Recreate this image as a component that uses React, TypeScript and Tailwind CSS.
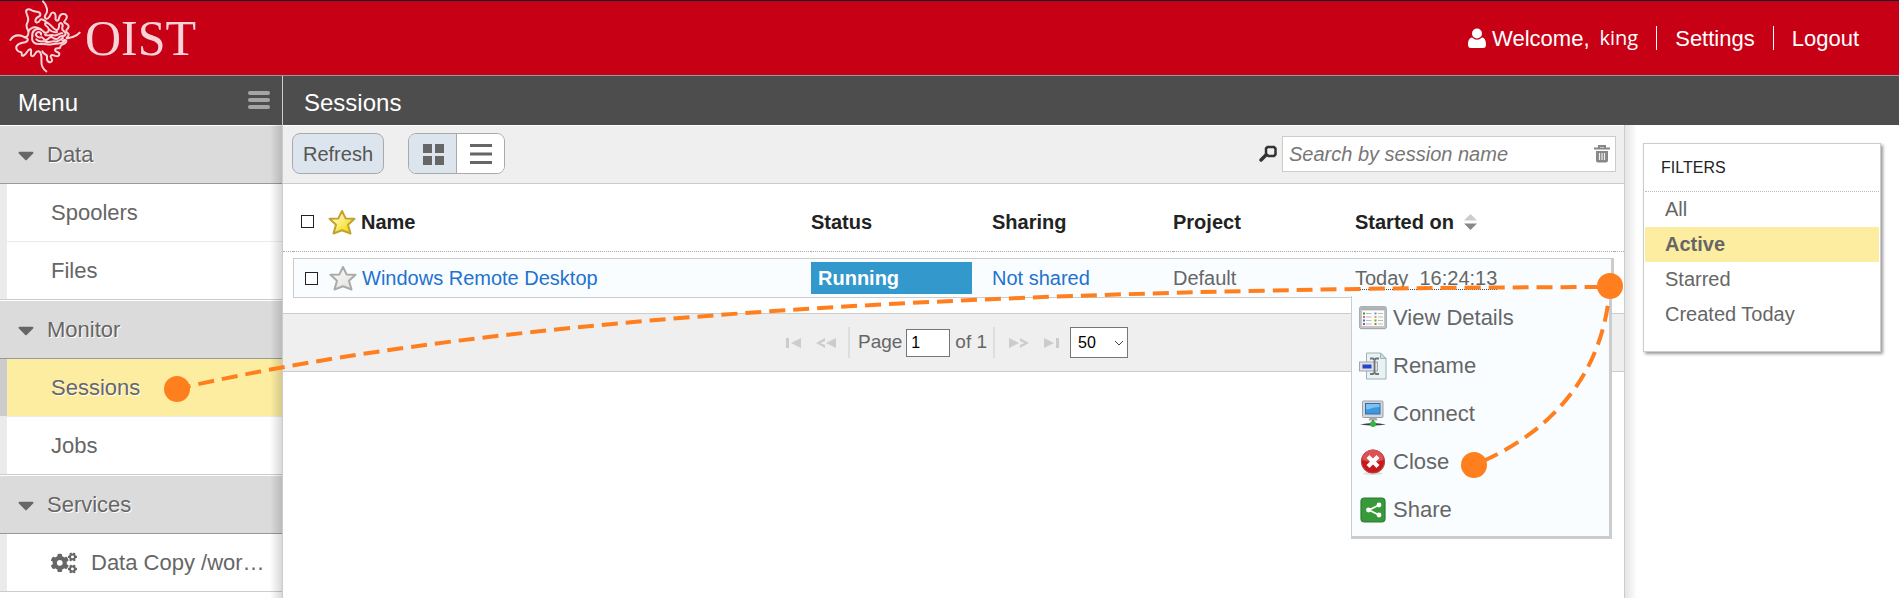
import React from 'react';
import { FaCaretDown, FaCogs } from 'react-icons/fa';

interface MenuItem {
  label: string;
  active?: boolean;
  icon?: React.ReactNode;
}

interface MenuGroup {
  title: string;
  items: MenuItem[];
}

const menuGroups: MenuGroup[] = [
  { title: 'Data', items: [{ label: 'Spoolers' }, { label: 'Files' }] },
  { title: 'Monitor', items: [{ label: 'Sessions', active: true }, { label: 'Jobs' }] },
  {
    title: 'Services',
    items: [{ label: 'Data Copy /wor…', icon: <FaCogs className="h-7 w-[26px]" /> }],
  },
];

const filters = ['All', 'Active', 'Starred', 'Created Today'];

function Emblem() {
  return (
    <svg
      viewBox="0 0 240 228"
      className="h-[76px] w-20 shrink-0"
      fill="none"
      stroke="#f8d3d8"
      strokeWidth="6"
      strokeLinecap="round"
      strokeLinejoin="round"
    >
      <path d="M114 4C126 16 130 34 122 44C116 52 122 60 130 54C140 46 134 36 146 38C158 40 146 62 156 62C166 62 158 44 172 42C188 40 188 54 180 62C172 70 186 68 190 76C194 88 182 86 184 94C188 102 196 102 188 110C180 118 188 114 200 112C212 108 216 108 224 98" />
      <path d="M16 120C28 102 42 104 56 110C68 116 72 100 70 92C64 84 62 76 68 66C74 56 66 48 64 38C60 26 72 26 82 32C94 38 104 32 106 42C108 52 96 48 92 58C88 70 100 70 104 62C108 54 116 60 122 64" />
      <path d="M70 94C82 76 98 82 108 88M58 112C78 116 66 128 52 128C36 132 30 140 36 150C42 160 52 152 50 162C50 172 60 166 66 156C74 144 80 146 78 158C76 170 84 172 90 162C96 150 106 152 108 164C112 176 106 188 112 200C116 208 120 212 124 214" />
      <path d="M112 154C116 166 128 160 126 172C124 184 134 190 140 184C146 176 132 172 138 166C144 160 156 176 162 166C168 154 150 158 150 150C152 140 166 150 166 140C166 132 176 136 182 128C188 120 180 118 172 122" />
      <path d="M82 108C80 92 94 84 106 88C118 92 114 100 124 98C134 96 134 84 124 78C116 72 122 64 130 70C140 76 142 84 150 88C158 94 164 84 162 74C166 64 176 72 172 82C168 94 182 92 182 102C180 112 168 104 162 112C158 120 148 118 142 112C134 106 132 118 124 120C114 122 116 110 108 112C98 114 90 106 94 100C100 92 110 98 108 104" />
      <path d="M82 108C78 126 90 134 106 132C122 130 132 136 146 132C160 128 170 134 178 124M94 118C104 130 114 120 124 126C134 128 142 122 150 124C162 126 166 118 174 114M120 104C128 110 138 102 148 106C156 108 164 98 172 100M132 88C140 96 148 98 156 96" />
    </svg>
  );
}

function UserIcon() {
  return (
    <svg viewBox="0 0 18 20" className="h-5 w-[18px]" fill="currentColor">
      <circle cx="9" cy="5.5" r="5" />
      <path d="M4 9.500C1 10 0 13 0 16.500Q0 20 3 20H15Q18 20 18 16.500C18 13 17 10 14 9.500Q9 14 4 9.500Z" />
    </svg>
  );
}

function Star({ gold }: { gold?: boolean }) {
  return (
    <svg viewBox="0 0 28 26" className="h-[26px] w-7">
      <defs>
        <linearGradient id={gold ? 'star-gold' : 'star-grey'} x1="0" y1="0" x2="1" y2="1">
          <stop offset="0.2" stopColor={gold ? '#fffbc8' : '#f6f6f4'} />
          <stop offset="0.8" stopColor={gold ? '#f4dc1c' : '#e6e6e4'} />
        </linearGradient>
      </defs>
      <path
        d="M14 2L17.6 9.4L26.5 9.8L20 15.8L22.5 24.5L14 21.2L5.5 24.5L8 15.8L1.5 9.8L10.4 9.4Z"
        fill={gold ? 'url(#star-gold)' : 'url(#star-grey)'}
        stroke={gold ? '#c3a12c' : '#aaaaa8'}
        strokeWidth="2"
        strokeLinejoin="round"
      />
    </svg>
  );
}

function DetailsIcon() {
  const rows = [9, 12.5, 16, 19.5];
  const left = ['#3a9d2c', '#d66', '#46e', '#a55'];
  const right = ['#59f', '#e93', '#4b3', '#d55'];
  return (
    <svg viewBox="0 0 28 28" className="size-7">
      <rect x="0.7" y="2.7" width="26.6" height="22" rx="1.5" fill="#c4c6c8" stroke="#9c9fa1" />
      <rect x="2" y="3.5" width="24" height="2.5" fill="#adb0b3" />
      <rect x="3" y="6.5" width="22" height="15.5" fill="#fbfbfa" />
      {rows.map((y, i) => (
        <g key={y}>
          <rect x="4" y={y - 0.5} width="2" height="2" fill={left[i]} />
          <path d={`M7 ${y + 0.5}h5.5M19 ${y + 0.5}h5`} stroke="#bbb" strokeWidth="1.2" />
          <rect x="15.5" y={y - 0.5} width="2" height="2" fill={right[i]} />
        </g>
      ))}
    </svg>
  );
}

function RenameIcon() {
  return (
    <svg viewBox="0 0 28 28" className="size-7">
      <path d="M7.5 1H21.5L27 6.5V27H7.5Z" fill="#e9f2f2" stroke="#9db4b2" />
      <path d="M21.5 1V6.5H27Z" fill="#cfdfdd" stroke="#9db4b2" />
      <rect x="0.5" y="10" width="18" height="9" fill="#dfe1e6" stroke="#a2a5ae" />
      <rect x="3.5" y="12.5" width="9" height="4" fill="#2444c9" />
      <path d="M11 6.5H14L15.5 8L17 6.5H20M15.5 8V20.5M11 22H14L15.5 20.5L17 22H20" fill="none" stroke="#70757a" strokeWidth="1.8" />
    </svg>
  );
}

function ConnectIcon() {
  return (
    <svg viewBox="0 0 28 28" className="size-7">
      <rect x="3.5" y="1" width="20.5" height="16.5" rx="1" fill="#d4d6d8" stroke="#9da0a3" />
      <rect x="6.5" y="3.5" width="14.5" height="10.5" fill="#3f97df" stroke="#2a6fb3" />
      <path d="M7 4H20.5V7C15 7 12 9 7 9.5Z" fill="#7fc0f2" />
      <path d="M10.5 18H17.5L18.5 20.5H9.5Z" fill="#a7aaac" />
      <path d="M1 24.5Q14 21.5 27 24.5Q14 26.5 1 24.5Z" fill="#3c3f3c" />
      <path d="M13 20h2v4h-2z" fill="#777" />
      <circle cx="14" cy="24" r="3" fill="#35b53c" />
    </svg>
  );
}

function CloseIcon() {
  return (
    <svg viewBox="0 0 28 28" className="size-7">
      <ellipse cx="14" cy="25.5" rx="10" ry="1.5" fill="#ddd" />
      <circle cx="14" cy="13.5" r="11.5" fill="#c9171c" stroke="#b5484a" strokeWidth="1.2" />
      <path d="M3.5 12A10.5 10.5 0 0 1 24.5 12Q14 16 3.5 12Z" fill="#dc5254" />
      <path d="M9 8.5L19 18.5M19 8.5L9 18.5" stroke="#fff" strokeWidth="4.2" />
    </svg>
  );
}

function ShareIcon() {
  return (
    <svg viewBox="0 0 28 28" className="size-7">
      <rect x="2" y="2" width="24" height="24" rx="3.5" fill="#37993a" stroke="#2a7c30" strokeWidth="1.2" />
      <path d="M20 9L10 14L20 19" fill="none" stroke="#fff" strokeWidth="1.8" />
      <circle cx="20" cy="9" r="2.4" fill="#fff" />
      <circle cx="9.5" cy="14" r="2.4" fill="#fff" />
      <circle cx="20" cy="19" r="2.4" fill="#fff" />
    </svg>
  );
}

const actions = [
  { label: 'View Details', icon: <DetailsIcon /> },
  { label: 'Rename', icon: <RenameIcon /> },
  { label: 'Connect', icon: <ConnectIcon /> },
  { label: 'Close', icon: <CloseIcon /> },
  { label: 'Share', icon: <ShareIcon /> },
];

function Header() {
  return (
    <header className="flex h-[76px] shrink-0 items-center justify-between border-t border-b border-t-[#14202e] border-b-[#999] bg-[#c80016] pr-10 text-[22px] text-white">
      <a href="#home" className="flex items-center pl-[5px] text-[#f8d3d8]">
        <Emblem />
        <span className="font-['Liberation_Serif',serif] text-[50px] leading-[72px]">OIST</span>
      </a>
      <nav className="flex items-center gap-[18px]">
        <div className="flex items-center gap-1.5">
          <UserIcon />
          <span>Welcome,</span>
          <span className="pl-1 font-['Open_Sans',sans-serif] text-xl leading-6">king</span>
        </div>
        <span className="h-6 w-px bg-white" />
        <a href="#settings">Settings</a>
        <span className="h-6 w-px bg-white" />
        <a href="#logout">Logout</a>
      </nav>
    </header>
  );
}

function Sidebar() {
  return (
    <aside className="relative w-[283px] shrink-0 border-r border-[#ccc] text-[22px] text-[#666]">
      {menuGroups.map((group) => (
        <section key={group.title}>
          <button className="flex h-[59px] w-full items-center border-t border-b border-t-white border-b-[#999] bg-[#dbdbdb] pl-[18px] text-left [text-shadow:1px_1px_0_#fff]">
            <FaCaretDown className="mr-[13px] h-7 w-4" />
            {group.title}
          </button>
          <ul>
            {group.items.map((item) => (
              <li key={item.label} className="border-b border-[#ebebeb] last:border-[#ccc]">
                <a
                  href="#menu"
                  className={`flex h-[57px] items-center border-l-[7px] pl-11 whitespace-nowrap ${
                    item.active
                      ? 'border-l-[#ccc] bg-[#fdeda1] [text-shadow:1px_1px_0_#fff]'
                      : 'border-l-[#ebebeb] bg-white'
                  }`}
                >
                  {item.icon && <span className="mr-3.5">{item.icon}</span>}
                  {item.label}
                </a>
              </li>
            ))}
          </ul>
        </section>
      ))}
      <div className="pointer-events-none absolute inset-y-0 right-0 w-3 bg-linear-to-l from-black/15 to-transparent" />
    </aside>
  );
}

function Toolbar() {
  return (
    <div className="flex h-[59px] items-center border-t border-b border-t-white border-b-[#ccc] bg-[#efefef] pr-2 pb-0.5 pl-[9px]">
      <button className="h-[41px] rounded-lg border border-[#aaa] bg-[#dce5ee] px-2.5 text-xl text-[#555]">
        Refresh
      </button>
      <div className="ml-6 flex h-[41px] overflow-hidden rounded-lg border border-[#aaa]">
        <button aria-label="Grid view" className="grid w-12 place-items-center border-r border-[#aaa] bg-[#dce5ee]">
          <svg viewBox="0 0 22 22" className="size-[22px]" fill="#666">
            <path d="M1 1h9v9H1zM13 1h9v9h-9zM1 13h9v9H1zM13 13h9v9h-9z" />
          </svg>
        </button>
        <button aria-label="List view" className="grid w-[47px] place-items-center bg-white">
          <svg viewBox="0 0 22 22" className="size-[22px]" fill="#666">
            <path d="M0 1h22v3H0zM0 9.5h22v3H0zM0 18h22v3H0z" />
          </svg>
        </button>
      </div>
      <label htmlFor="search" className="mr-1 ml-auto" aria-label="Search">
        <svg viewBox="0 0 20 20" className="size-5" fill="none" stroke="#333">
          <path d="M8 4.5L9.5 3H16L17.500 4.5V10.500L16 12H10.500L8 10Z" strokeWidth="2.5" />
          <path d="M8 11L3 16" strokeWidth="3.5" strokeLinecap="round" />
        </svg>
      </label>
      <div className="flex h-9 w-[334px] items-center border border-[#ccc] bg-white pr-1 pl-1.5">
        <input
          id="search"
          placeholder="Search by session name"
          className="min-w-0 flex-1 text-xl italic outline-none placeholder:text-[#777]"
        />
        <button aria-label="Clear search">
          <svg viewBox="0 0 18 20" className="h-5 w-[18px]">
            <path d="M1 4.5H17M6 3.5V2H12V3.5" fill="none" stroke="#888" strokeWidth="2" />
            <path d="M3 7H15V16.5Q15 18.5 13 18.5H5Q3 18.5 3 16.5Z" fill="#888" />
            <path d="M6.500 9V16M9 9V16M11.5 9V16" stroke="#eee" strokeWidth="1.2" />
          </svg>
        </button>
      </div>
    </div>
  );
}

function CheckBox({ label }: { label: string }) {
  return (
    <input
      type="checkbox"
      aria-label={label}
      className="size-[13px] shrink-0 appearance-none border border-[#222] bg-white"
    />
  );
}

function SessionTable() {
  return (
    <table className="w-full table-fixed border-separate border-spacing-0 text-left text-xl text-[#666]">
      <colgroup>
        <col className="w-2.5" />
        <col />
        <col className="w-[181px]" />
        <col className="w-[181px]" />
        <col className="w-[182px]" />
        <col className="w-[259px]" />
        <col className="w-2.5" />
      </colgroup>
      <thead>
        <tr className="h-[68px] text-[#222] [&>*]:border-b [&>*]:border-dotted [&>*]:border-[#aaa] [&>*]:pt-2">
          <td />
          <th className="pl-2">
            <div className="flex items-center">
              <CheckBox label="Select all" />
              <span className="mr-[5px] ml-3.5">
                <Star gold />
              </span>
              Name
            </div>
          </th>
          <th>Status</th>
          <th>Sharing</th>
          <th>Project</th>
          <th>
            <button className="flex items-center gap-2.5 font-bold">
              Started on
              <svg viewBox="0 0 13 18" className="h-[18px] w-[13px]">
                <path d="M6.5 1L13 7.5H0Z" fill="#ccc" />
                <path d="M0 10.5H13L6.5 17Z" fill="#888" />
              </svg>
            </button>
          </th>
          <td />
        </tr>
      </thead>
      <tbody>
        <tr className="h-1.5">
          <td colSpan={7} />
        </tr>
        <tr className="h-10">
          <td />
          <td className="border border-r-0 border-[#ccc] bg-[#fafdff] pl-[11px]">
            <div className="flex items-center">
              <CheckBox label="Select Windows Remote Desktop" />
              <button aria-label="Star session" className="mr-[5px] ml-[11px]">
                <Star />
              </button>
              <a href="#session" className="text-[#2272ce]">
                Windows Remote Desktop
              </a>
            </div>
          </td>
          <td className="border-y border-[#ccc] bg-[#fafdff] pr-5">
            <div className="h-8 bg-[#3399cc] pl-[7px] leading-[33px] font-bold text-white">Running</div>
          </td>
          <td className="border-y border-[#ccc] bg-[#fafdff]">
            <a href="#sharing" className="text-[#2272ce]">
              Not shared
            </a>
          </td>
          <td className="border-y border-[#ccc] bg-[#fafdff]">Default</td>
          <td className="relative border border-r-[3px] border-l-0 border-[#ccc] bg-[#fafdff]">
            <span className="border-b border-dotted border-[#444] leading-5 whitespace-pre">Today  16:24:13</span>
            <ActionMenu />
          </td>
          <td />
        </tr>
        <tr className="h-[15px]">
          <td colSpan={7} />
        </tr>
      </tbody>
    </table>
  );
}

function ActionMenu() {
  return (
    <ul className="absolute top-full -right-px -left-1 z-10 -mt-px border-r-[3px] border-b-[3px] border-l border-[#ccc] bg-[#fafdff]">
      {actions.map((action) => (
        <li key={action.label}>
          <button className="flex h-12 w-full items-center gap-1.5 pr-2 pb-1 pl-[7px] text-[22px]">
            {action.icon}
            {action.label}
          </button>
        </li>
      ))}
    </ul>
  );
}

function Pager() {
  return (
    <div className="flex h-[59px] items-center justify-center border-y border-[#ccc] bg-[#efefef] pl-1.5 text-[19px] text-[#666]">
      <button aria-label="First page">
        <svg viewBox="0 0 17 12" className="h-3 w-[17px]" fill="#ccc">
          <path d="M1 1h3v10H1zM16 1v10L6 6z" />
        </svg>
      </button>
      <button aria-label="Previous page" className="ml-3.5">
        <svg viewBox="0 0 20 12" className="h-3 w-5" fill="#ccc">
          <path d="M20 1v10L10 6zM9 1v3L4.5 6L9 8v3L0 6z" />
        </svg>
      </button>
      <span className="mr-2 ml-3 h-[31px] w-0.5 bg-[#ddd]" />
      <label htmlFor="page">Page</label>
      <input
        id="page"
        defaultValue="1"
        className="mt-px mr-[5px] ml-1 h-7 w-11 border border-[#767676] bg-white px-1 text-base text-black"
      />
      of 1
      <span className="mr-3.5 ml-1.5 h-[31px] w-0.5 bg-[#ddd]" />
      <button aria-label="Next page">
        <svg viewBox="0 0 20 12" className="h-3 w-5" fill="#ccc">
          <path d="M0 1v10L10 6zM11 1v3L15.5 6L11 8v3L20 6z" />
        </svg>
      </button>
      <button aria-label="Last page" className="ml-3.5">
        <svg viewBox="0 0 17 12" className="h-3 w-[17px]" fill="#ccc">
          <path d="M13 1h3v10h-3zM1 1v10L11 6z" />
        </svg>
      </button>
      <div className="relative ml-2.5">
        <select
          aria-label="Rows per page"
          className="block h-[31px] w-[58px] appearance-none border border-[#767676] bg-white pl-[7px] text-base text-black"
        >
          <option>50</option>
        </select>
        <svg viewBox="0 0 10 6" className="pointer-events-none absolute top-[13px] right-1 h-1.5 w-2.5">
          <path d="M1 1L5 5L9 1" fill="none" stroke="#444" />
        </svg>
      </div>
    </div>
  );
}

function Filters() {
  return (
    <aside className="w-[274px] shrink-0 bg-linear-to-r from-[#e4e4e4] to-white to-[12px] px-[18px] pt-[18px]">
      <section className="border border-[#ccc] bg-white px-px pb-[19px] shadow-[2px_2px_3px_#999]">
        <h2 className="border-b border-dotted border-[#bbb] pl-4 text-base leading-[47px] text-[#222]">FILTERS</h2>
        <ul className="text-xl text-[#666]">
          {filters.map((filter) => (
            <li key={filter}>
              <a
                href="#filter"
                className={`block pl-5 leading-[35px] ${filter === 'Active' ? 'bg-[#fdeda1] font-bold' : ''}`}
              >
                {filter}
              </a>
            </li>
          ))}
        </ul>
      </section>
    </aside>
  );
}

// Dashed route: menu entry -> session row -> context menu action
function Route() {
  return (
    <svg
      viewBox="0 0 1899 598"
      className="pointer-events-none absolute top-0 left-0 z-20 h-[598px] w-[1899px]"
      fill="none"
      stroke="#ff7f1e"
      strokeWidth="4"
    >
      <path d="M177 389C500 314 1000 288 1610 287" strokeDasharray="16 8" strokeDashoffset="2" />
      <path d="M1610 286C1604 372 1554 432 1474 465" strokeDasharray="16 8" strokeDashoffset="4" />
      <g fill="#ff7f1e" stroke="none">
        <circle cx="177" cy="389" r="13" />
        <circle cx="1610" cy="286" r="13" />
        <circle cx="1474" cy="465" r="13" />
      </g>
    </svg>
  );
}

export default function App() {
  return (
    <div className="relative flex h-screen flex-col overflow-hidden bg-white font-['Liberation_Sans',Arial,sans-serif]">
      <Header />
      <div className="flex h-[49px] shrink-0 bg-[#4d4d4d] text-2xl text-white">
        <div className="flex w-[283px] items-center justify-between border-r border-[#ccc] pt-1 pr-3 pl-[18px]">
          Menu
          <button aria-label="Toggle menu" className="mb-1.5 flex flex-col gap-[3px]">
            <span className="h-1 w-[22px] rounded-xs bg-[#a5a5a5]" />
            <span className="h-1 w-[22px] rounded-xs bg-[#a5a5a5]" />
            <span className="h-1 w-[22px] rounded-xs bg-[#a5a5a5]" />
          </button>
        </div>
        <h1 className="pt-1 pl-[21px] leading-[45px]">Sessions</h1>
      </div>
      <div className="flex min-h-0 flex-1">
        <Sidebar />
        <main className="min-w-0 flex-1 border-r border-[#ccc]">
          <Toolbar />
          <SessionTable />
          <Pager />
        </main>
        <Filters />
      </div>
      <Route />
    </div>
  );
}
